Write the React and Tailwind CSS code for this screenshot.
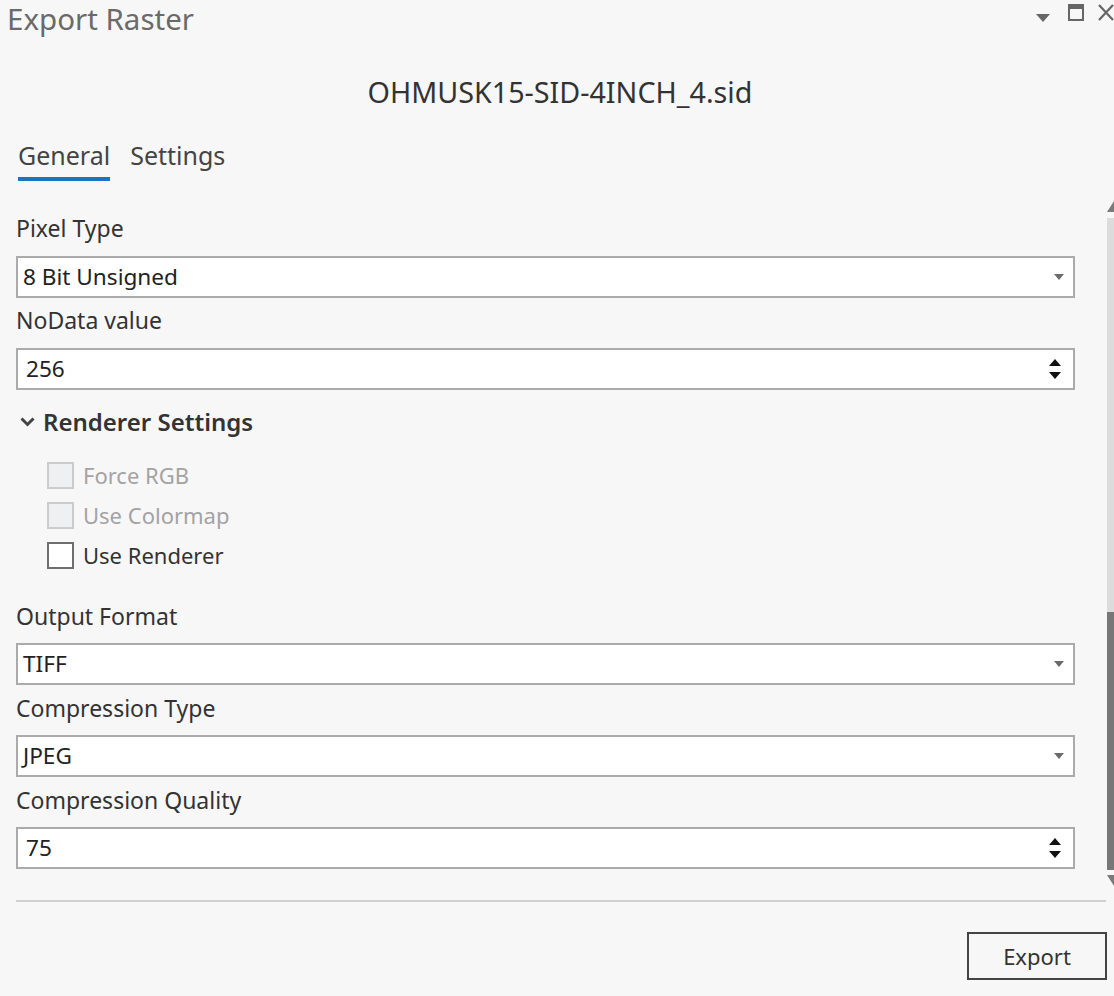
import React from "react";

const font = { fontFamily: '"Noto Sans", "Open Sans", sans-serif' };

function Caret() {
  return (
    <svg width="10" height="6" viewBox="0 0 10 6" className="shrink-0">
      <path d="M0 0 L10 0 L5 6 Z" fill="#6b6b6b" />
    </svg>
  );
}

function Spin() {
  return (
    <div className="flex flex-col gap-[6px] items-center shrink-0">
      <svg width="12" height="7" viewBox="0 0 12 7"><path d="M6 0 L12 7 L0 7 Z" fill="#111" /></svg>
      <svg width="12" height="7" viewBox="0 0 12 7"><path d="M0 0 L12 0 L6 7 Z" fill="#111" /></svg>
    </div>
  );
}

function Label({ children }) {
  return <div className="text-[23px] leading-[28px] text-[#333] h-[28px] whitespace-nowrap">{children}</div>;
}

function Select({ value }) {
  return (
    <div className="h-[42px] bg-white border-2 border-[#ababab] flex items-center justify-between pl-[5px] pr-[9px]">
      <span className="text-[22.6px] text-[#222]">{value}</span>
      <Caret />
    </div>
  );
}

function Num({ value }) {
  return (
    <div className="h-[42px] bg-white border-2 border-[#ababab] flex items-center justify-between pl-[8px] pr-[12px]">
      <span className="text-[22.6px] text-[#222]">{value}</span>
      <Spin />
    </div>
  );
}

function Check({ label, disabled }) {
  return (
    <div className="flex items-center gap-[9px] h-[40px]">
      <div
        className={
          "w-[27px] h-[27px] border-2 " +
          (disabled ? "bg-[#eef0f2] border-[#cccccc]" : "bg-white border-[#6e6e6e]")
        }
      />
      <span className={"text-[22px] " + (disabled ? "text-[#a3a3a3]" : "text-[#333]")}>{label}</span>
    </div>
  );
}

export default function App() {
  return (
    <div style={font} className="w-[1114px] h-[996px] bg-[#f7f7f7] flex flex-col overflow-hidden">
      {/* title bar */}
      <div className="h-[38px] flex items-center justify-between pl-[7px]">
        <span className="text-[29.5px] text-[#6a6a6a] leading-[36px]">Export Raster</span>
        <div className="flex items-center">
          <svg width="14" height="8" viewBox="0 0 14 8" className="mr-[18px] mt-[-2px]"><path d="M0 0 L14 0 L7 8 Z" fill="#666" /></svg>
          <svg width="16" height="17" viewBox="0 0 16 17" className="mr-[14px] mt-[-14px]">
            <rect x="1" y="1" width="14" height="15" fill="none" stroke="#666" strokeWidth="2" />
            <rect x="1" y="1" width="14" height="4" fill="#666" />
          </svg>
          <svg width="16" height="17" viewBox="0 0 16 17" className="mt-[-14px]">
            <path d="M1 1 L15 16 M15 1 L1 16" stroke="#666" strokeWidth="2.2" />
          </svg>
        </div>
      </div>

      <div className="pt-[36px] flex justify-center pl-[6px]">
        <span className="text-[28.7px] leading-[36px] text-[#333]">OHMUSK15-SID-4INCH_4.sid</span>
      </div>

      {/* tabs */}
      <div className="flex pl-[18px] gap-[20px] items-start mt-[27px]">
        <div className="flex flex-col">
          <span className="text-[25px] text-[#444] leading-[36px]">General</span>
          <div className="h-[4px] bg-[#1a75bb] mt-[4px]" />
        </div>
        <span className="text-[25px] text-[#444] leading-[36px]">Settings</span>
      </div>

      <div className="flex">
        <div className="flex-1 pl-[16px] pr-[32px] pt-[33px] flex flex-col">
          <Label>Pixel Type</Label>
          <div className="mt-[14px]"><Select value="8 Bit Unsigned" /></div>
          <div className="mt-[8px]"><Label>NoData value</Label></div>
          <div className="mt-[14px]"><Num value="256" /></div>

          <div className="mt-[16px] flex items-center h-[32px] pl-[4px] gap-[8px]">
            <svg width="15" height="10" viewBox="0 0 15 10"><path d="M1.5 1.5 L7.5 7.5 L13.5 1.5" fill="none" stroke="#444" strokeWidth="3" /></svg>
            <span className="text-[24px] font-semibold text-[#333] whitespace-nowrap">Renderer Settings</span>
          </div>
          <div className="pl-[31px] mt-[17px] flex flex-col">
            <Check label="Force RGB" disabled />
            <Check label="Use Colormap" disabled />
            <Check label="Use Renderer" />
          </div>

          <div className="mt-[27px]"><Label>Output Format</Label></div>
          <div className="mt-[13px]"><Select value="TIFF" /></div>
          <div className="mt-[9px]"><Label>Compression Type</Label></div>
          <div className="mt-[13px]"><Select value="JPEG" /></div>
          <div className="mt-[9px]"><Label>Compression Quality</Label></div>
          <div className="mt-[13px]"><Num value="75" /></div>
        </div>
        {/* scrollbar */}
        <div className="w-[7px] flex flex-col pt-[20px]">
          <svg width="7" height="11" viewBox="0 0 7 11"><path d="M7 0 L7 11 L0 11 Z" fill="#7a7a7a" /></svg>
          <div className="mt-[6px] h-[394px] bg-[#dcdcdc]" />
          <div className="h-[258px] bg-[#777777]" />
          <svg width="7" height="11" viewBox="0 0 7 11" className="mt-[5px]"><path d="M0 0 L7 0 L7 11 Z" fill="#7a7a7a" /></svg>
        </div>
      </div>

      <div className="ml-[16px] mr-[8px] mt-[14px] h-[2px] bg-[#d0d0d0]" />

      <div className="flex justify-end pr-[7px] mt-[30px]">
        <button className="w-[140px] h-[48px] border-2 border-[#444] bg-[#f7f7f7] text-[22px] text-[#333]">
          Export
        </button>
      </div>
    </div>
  );
}
